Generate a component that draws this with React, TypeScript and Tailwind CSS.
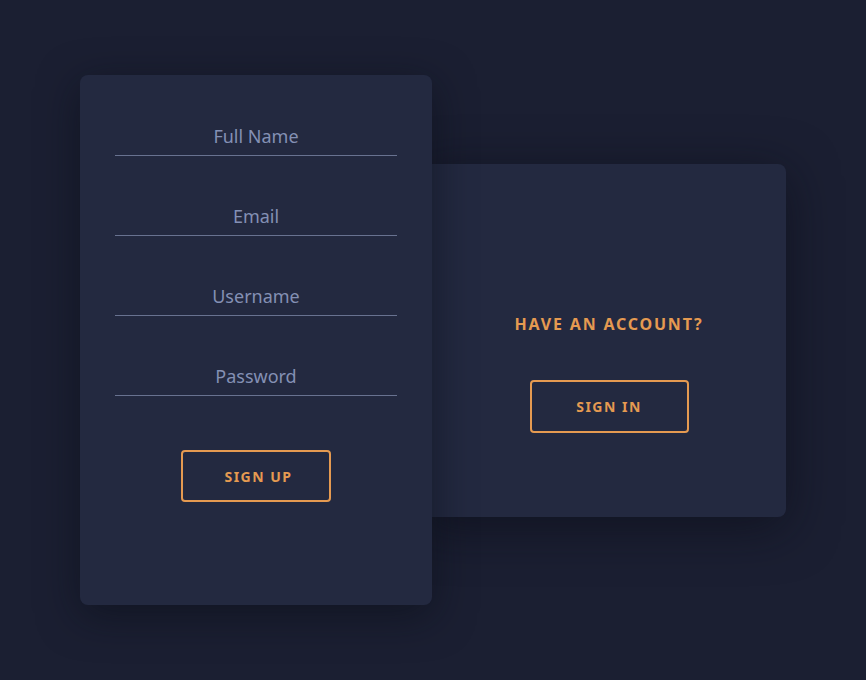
const FIELDS = ["Full Name", "Email", "Username", "Password"];

export default function App() {
  return (
    <div
      className="min-h-[680px] w-full bg-[#1b1f32] pl-[80px] pt-[75px]"
      style={{ fontFamily: '"Noto Sans", "Open Sans", sans-serif' }}
    >
      <div className="flex items-start">
        {/* sign up card */}
        <div className="relative z-10 flex h-[530px] w-[352px] flex-col items-center rounded-lg bg-[#232940] px-[35px] pt-[43px] shadow-[0_10px_40px_rgba(10,12,22,0.55)]">
          <div className="flex w-full flex-col gap-[42px]">
            {FIELDS.map((f) => (
              <input
                key={f}
                placeholder={f}
                className="h-[38px] w-full border-b border-[#687290] bg-transparent pb-[2px] text-center text-[18px] text-[#8b97bb] outline-none placeholder:text-[#8490b4]"
              />
            ))}
          </div>
          <button className="mt-[54px] h-[52px] w-[150px] rounded-[4px] border-2 border-[#e59a51] pl-[5px] text-[14px] font-bold tracking-[1.5px] text-[#e59a51]">
            SIGN UP
          </button>
        </div>

        {/* sign in card */}
        <div className="-ml-3 mt-[89px] flex h-[353px] w-[366px] flex-col items-center rounded-lg bg-[#232940] pl-3 pt-[149px] shadow-[0_10px_50px_rgba(10,12,22,0.6)]">
          <h2 className="text-[16px] font-bold leading-[22px] tracking-[1.8px] text-[#e59a51]">
            HAVE AN ACCOUNT?
          </h2>
          <button className="mt-[45px] h-[53px] w-[159px] rounded-[4px] border-2 border-[#e59a51] text-[14px] font-bold tracking-[1.5px] text-[#e59a51]">
            SIGN IN
          </button>
        </div>
      </div>
    </div>
  );
}
